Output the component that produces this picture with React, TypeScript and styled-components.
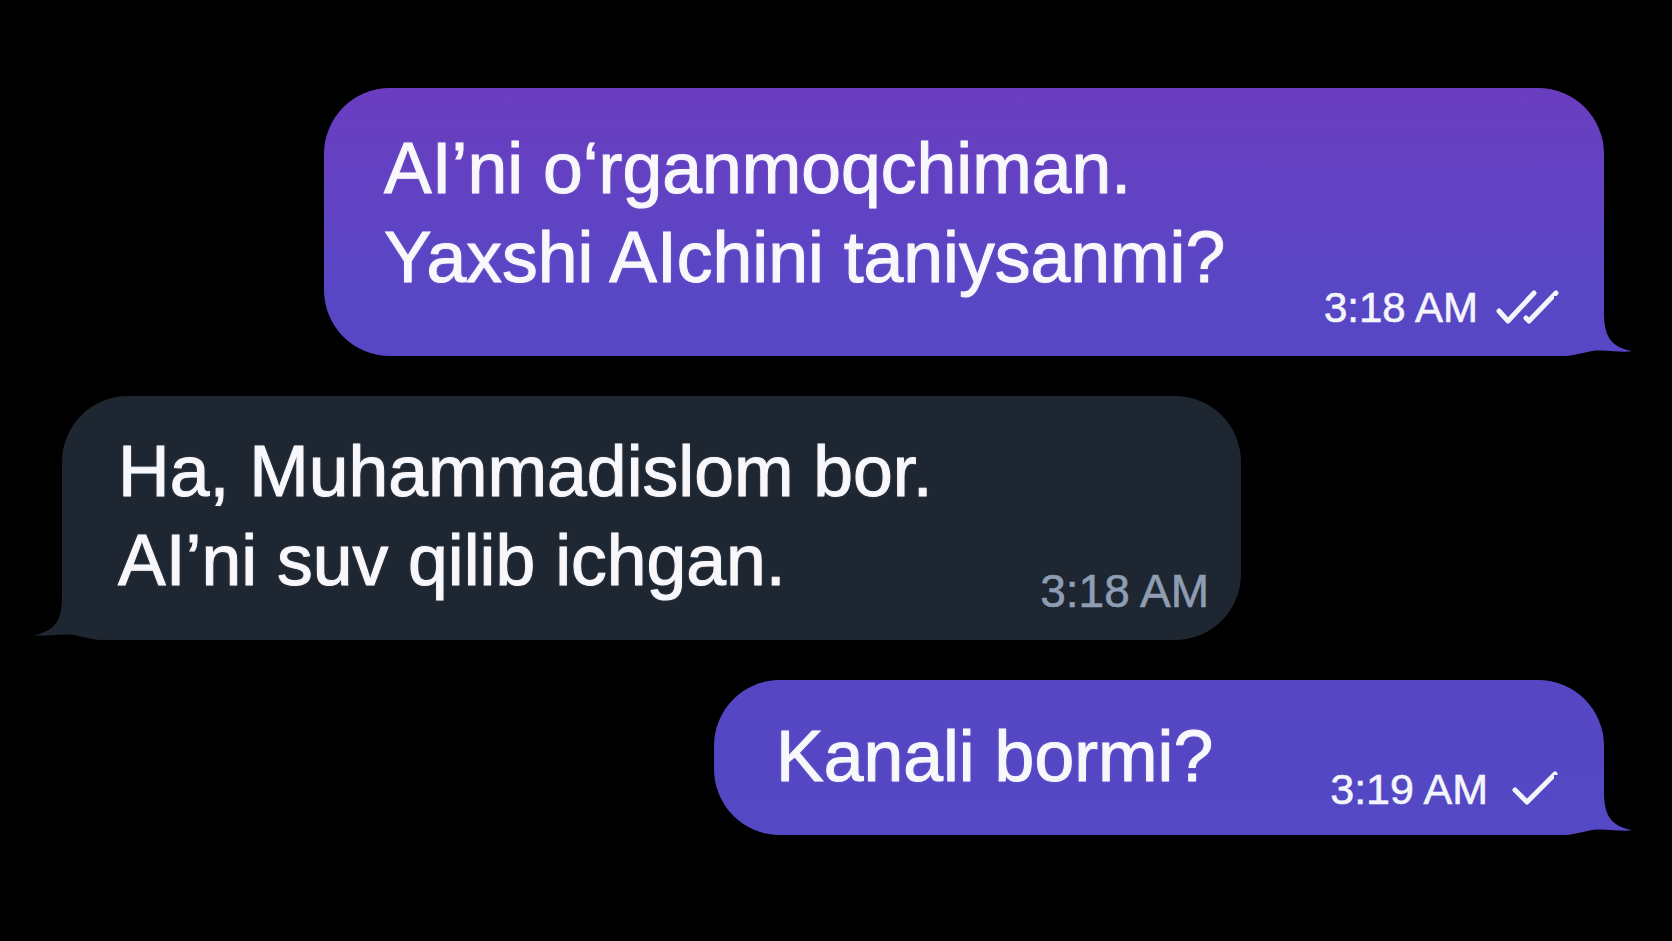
import React from "react";
import styled, { createGlobalStyle } from "styled-components";

const Global = createGlobalStyle`
  html, body { margin: 0; padding: 0; background: #000; }
  body { font-family: "Liberation Sans", Arial, sans-serif; -webkit-font-smoothing: antialiased; }
`;

const Screen = styled.div`
  width: 1672px;
  height: 941px;
  box-sizing: border-box;
  background: #000;
  padding: 88px 68px 0 62px;
  display: flex;
  flex-direction: column;
  gap: 40px;
  overflow: hidden;
`;

type Side = "out" | "in";

const Bubble = styled.div<{
  $side: Side;
  $width: number;
  $pt: number;
  $pl: number;
  $pr: number;
  $pb: number;
  $bg: string;
}>`
  position: relative;
  align-self: ${(p) => (p.$side === "out" ? "flex-end" : "flex-start")};
  width: ${(p) => p.$width}px;
  box-sizing: border-box;
  padding: ${(p) => `${p.$pt}px ${p.$pr}px ${p.$pb}px ${p.$pl}px`};
  display: flex;
  align-items: flex-end;
  justify-content: space-between;
  border-radius: 66px;
  ${(p) =>
    p.$side === "out"
      ? "border-bottom-right-radius: 40px;"
      : "border-bottom-left-radius: 40px;"}
  background: ${(p) => p.$bg};
`;

const Text = styled.div<{ $mb: number }>`
  font-size: 71.5px;
  line-height: 89px;
  color: #f8f8fc;
  white-space: pre-line;
  margin-bottom: ${(p) => p.$mb}px;
  -webkit-text-stroke: 1px #f8f8fc;
  text-shadow: 0 0 3px rgba(255, 255, 255, 0.2);
`;

const Meta = styled.div<{ $size: number; $lh: number; $color: string; $gap: number }>`
  display: flex;
  align-items: center;
  gap: ${(p) => p.$gap}px;
  font-size: ${(p) => p.$size}px;
  line-height: ${(p) => p.$lh}px;
  color: ${(p) => p.$color};
  -webkit-text-stroke: 0.6px ${(p) => p.$color};
  white-space: nowrap;
`;

const Tail = styled.svg<{ $side: Side }>`
  position: absolute;
  bottom: 0;
  width: 80px;
  height: 60px;
  ${(p) =>
    p.$side === "out"
      ? "right: -30px;"
      : "left: -30px; transform: scaleX(-1);"}
`;

const TailShape = ({ side, color }: { side: Side; color: string }) => (
  <Tail $side={side} viewBox="0 0 80 60">
    <path
      d="M0 0 H50 V16 C50 38 55 51 78 55 C68 57.5 53 53 38 55 C29 56.5 21 60 6 60 H0 Z"
      fill={color}
    />
  </Tail>
);

const DoubleCheck = () => (
  <svg width="64" height="36" viewBox="0 0 64 36" fill="none">
    <path
      d="M3 21 L12 31 L38 3"
      stroke="#f4f4fb"
      strokeWidth="5"
      strokeLinecap="round"
      strokeLinejoin="round"
    />
    <path
      d="M30 28 L33 31 L60 3"
      stroke="#f4f4fb"
      strokeWidth="5"
      strokeLinecap="round"
      strokeLinejoin="round"
    />
  </svg>
);

const SingleCheck = () => (
  <svg width="46" height="36" viewBox="0 0 46 36" fill="none">
    <path
      d="M3 19 L15 31 L43 3"
      stroke="#f4f4fb"
      strokeWidth="5"
      strokeLinecap="round"
      strokeLinejoin="round"
    />
  </svg>
);

export default function App() {
  return (
    <>
      <Global />
      <Screen>
        <Bubble
          $side="out"
          $width={1280}
          $pt={36}
          $pl={60}
          $pr={44}
          $pb={23}
          $bg="linear-gradient(180deg, #6a3dbf 0%, #6142c3 40%, #5847c5 calc(100% - 60px), #5747c5 100%)"
        >
          <Text $mb={31}>{"AI’ni o‘rganmoqchiman.\nYaxshi AIchini taniysanmi?"}</Text>
          <Meta $size={42} $lh={50} $color="#f4f4fb" $gap={18}>
            <span>3:18 AM</span>
            <DoubleCheck />
          </Meta>
          <TailShape side="out" color="#5747c5" />
        </Bubble>

        <Bubble
          $side="in"
          $width={1179}
          $pt={31}
          $pl={56}
          $pr={32}
          $pb={22}
          $bg="#1e2632"
        >
          <Text $mb={13}>{"Ha, Muhammadislom bor.\nAI’ni suv qilib ichgan."}</Text>
          <Meta $size={46} $lh={54} $color="#8e9db2" $gap={0}>
            <span>3:18 AM</span>
          </Meta>
          <TailShape side="in" color="#1e2632" />
        </Bubble>

        <Bubble
          $side="out"
          $width={890}
          $pt={32}
          $pl={62}
          $pr={46}
          $pb={21}
          $bg="linear-gradient(180deg, #5646c3 0%, #5448c5 100%)"
        >
          <Text $mb={13}>{"Kanali bormi?"}</Text>
          <Meta $size={43} $lh={50} $color="#f4f4fb" $gap={24}>
            <span>3:19 AM</span>
            <SingleCheck />
          </Meta>
          <TailShape side="out" color="#5448c5" />
        </Bubble>
      </Screen>
    </>
  );
}
